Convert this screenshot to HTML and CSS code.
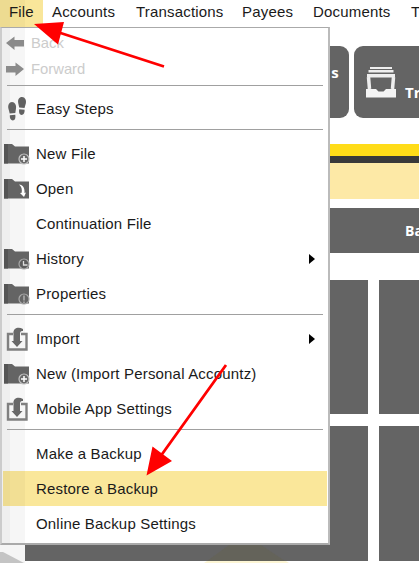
FILE: index.html
```html
<!DOCTYPE html>
<html lang="en">
<head>
<meta charset="utf-8">
<title>Accounts</title>
<link rel="stylesheet" href="styles.css">
</head>
<body>
<svg class="defs" aria-hidden="true">
  <defs>
    <symbol id="folder" viewBox="0 0 27 24"><path d="M1 2h8l3 2.500h14V21.500H1z" fill="#646464"/><path d="M1 2h4v19.500H1z" fill="#555"/></symbol>
    <symbol id="import" viewBox="0 0 27 24"><path d="M10 7H5v15.500h18.500V7H18" fill="none" stroke="#808080" stroke-width="2.400"/><path d="M20 2C14.500-1 9.500 2 10.500 7v7H8.500l5.500 6 5.500-6h-2.500V7c0-2.500 1-3.500 3-3z" fill="#686868"/></symbol>
  </defs>
</svg>
<div class="app">
  <nav class="menubar"><span class="top file">File</span><span class="top accounts">Accounts</span><span class="top transactions">Transactions</span><span class="top payees">Payees</span><span class="top documents">Documents</span><span class="top">T</span></nav>
  <div class="toolbar">
    <div class="tool first"><span>s</span></div>
    <div class="tool second">
      <svg width="32" height="33" viewBox="0 0 32 33"><path d="M5 1h22v2H5zM3.500 4h25v2.500h-25zM2 8h28v3.500H2z" fill="#eee"/><path d="M3.500 11l1 12M28.500 11l-1 12" stroke="#eee" stroke-width="3.500"/><path d="M1 23h10l2.500 2.500h5L21 23h10v8.500H1z" fill="#f4f4f4"/></svg>
      <span>Tr</span>
    </div>
  </div>
  <div class="yellow"></div><div class="dark"></div><div class="pale"></div>
  <div class="heading"><span>Ba</span></div>
  <div class="tiles"><i></i><i></i><i></i><i></i></div>
  <svg class="corner" width="300" height="18" viewBox="0 0 300 18"><path d="M0 0h25v18H0z" fill="#f5f5f5"/><path d="M0 7l3 0 21 11H0z" fill="#c4c4c4"/><path d="M229 0h32l24 16h-78z" fill="#64635a"/><path d="M207 16h79l3 2h-85z" fill="#fdf6d5"/></svg>
</div>
<div class="menu">
  <div class="item nav"><svg class="icon" viewBox="0 0 27 24"><path d="M3 12l8.500-6.500V9H21v6.500h-9.500V19z" fill="#8b8b8b"/></svg><span>Back</span></div>
  <div class="item nav"><svg class="icon" viewBox="0 0 27 24"><path d="M21 12l-8.500-6.500V9H3v6.500h9.500V19z" fill="#8b8b8b"/></svg><span>Forward</span></div>
  <hr class="tight">
  <div class="item"><svg class="icon" viewBox="0 0 27 24"><g fill="#626262"><path d="M9 5c2.800 0 4.500 3 4 6.500L12.300 16l-5.600.5-1.300-5C4.600 8 6.200 5 9 5z"/><path d="M6.800 18.300l5.500-.5c.5 3.500-.5 5.700-2.500 5.700s-3.200-2.200-3-5.200z"/><path d="M19 0c3 0 4.500 3 3.800 6.500L21.500 11l-5.300-.5-1-4.500C14.500 2.500 16.200 0 19 0z"/><path d="M16.200 12.300l5.400.5c.2 3-1 5.200-3 5.200s-3-2.200-2.400-5.700z"/></g></svg><span>Easy Steps</span></div>
  <hr>
  <div class="item"><svg class="icon" viewBox="0 0 27 24"><use href="#folder"/><circle cx="21" cy="17" r="5" fill="#6a6a6a" stroke="#c0c0c0" stroke-width="1.200"/><path d="M21 14v6m-3-3h6" stroke="#fff" stroke-width="1.500"/></svg><span>New File</span></div>
  <div class="item"><svg class="icon" viewBox="0 0 27 24"><use href="#folder"/><path d="M16 7.500c4 .5 6 3.500 5.500 8.500l1.500-.5-2 4.500-4-4 1.700-.3c.6-3.500-.2-6-2.700-8.200z" fill="#fff"/></svg><span>Open</span></div>
  <div class="item"><span class="icon"></span><span>Continuation File</span></div>
  <div class="item"><svg class="icon" viewBox="0 0 27 24"><use href="#folder"/><circle cx="21" cy="17" r="5" fill="#5c5c5c" stroke="#a8a8a8" stroke-width="1.200"/><path d="M20.500 14v4h4" fill="none" stroke="#ddd" stroke-width="1.300"/></svg><span>History</span><b class="more"></b></div>
  <div class="item"><svg class="icon" viewBox="0 0 27 24"><use href="#folder"/><circle cx="21" cy="17" r="5" fill="#666" stroke="#a8a8a8" stroke-width="1.200"/><path d="M21 13.500v5m0 1v1.500" stroke="#bbb" stroke-width="1.300"/></svg><span>Properties</span></div>
  <hr>
  <div class="item"><svg class="icon" viewBox="0 0 27 24"><use href="#import"/></svg><span>Import</span><b class="more"></b></div>
  <div class="item"><svg class="icon" viewBox="0 0 27 24"><use href="#folder"/><circle cx="21" cy="17" r="5" fill="#6a6a6a" stroke="#c0c0c0" stroke-width="1.200"/><path d="M21 14v6m-3-3h6" stroke="#fff" stroke-width="1.500"/></svg><span>New (Import Personal Accountz)</span></div>
  <div class="item"><svg class="icon" viewBox="0 0 27 24"><use href="#import"/></svg><span>Mobile App Settings</span></div>
  <hr>
  <div class="item"><span class="icon"></span><span>Make a Backup</span></div>
  <div class="item selected"><span class="icon"></span><span>Restore a Backup</span></div>
  <div class="item"><span class="icon"></span><span>Online Backup Settings</span></div>
</div>
<svg class="arrows" width="419" height="563" viewBox="0 0 419 563"><g stroke="#f00" stroke-width="2.800"><path d="M164 66.500L59 32.500M226 365l-66 92"/></g><path d="M34 24l30-2-6 22.500zM146.500 475.500l6-29 19.500 14.500z" fill="#f00"/></svg>
</body>
</html>
```

FILE: styles.css
```css
body {
  margin: 0;
  width: 419px;
  height: 563px;
  overflow: hidden;
  position: relative;
  background: #fff;
  color: #1a1a1a;
  font: 15px "Liberation Sans", Arial, sans-serif;
  letter-spacing: 0.18px;
}
.defs { position: absolute; width: 0; height: 0; }
.app { height: 563px; overflow: hidden; }
.menubar { display: flex; height: 27px; line-height: 23px; white-space: nowrap; }
.top { flex: none; box-sizing: border-box; }
.file {
  width: 43px;
  padding-left: 9px;
  margin-right: 9px;
  background: linear-gradient(90deg, #eddb91 0 10px, #f2df94 10px 25px, #f9e69a 25px);
}
.accounts { width: 84px; }
.transactions { width: 106px; }
.payees { width: 71px; }
.documents { width: 98px; }
.toolbar { display: flex; gap: 5px; padding: 19px 0 0 269px; height: 72px; }
.tool {
  flex: none;
  box-sizing: border-box;
  height: 72px;
  border-radius: 9px;
  background: #646464;
  color: #fff;
  font: bold 15px "Open Sans", sans-serif;
  display: flex;
}
.first { width: 80px; padding: 16px 10px 0 0; justify-content: flex-end; }
.second { width: 100px; padding: 20px 0 0 11px; }
.second span { padding: 16px 0 0 8px; }
.yellow { height: 12px; margin-top: 26px; background: #ffdc18; }
.dark { height: 7px; background: #393939; }
.pale { height: 36px; background: #fde9a6; }
.heading {
  height: 45px;
  margin: 9px 0 27px;
  padding-left: 405px;
  line-height: 45px;
  background: #646464;
  color: #fff;
  font-family: "Open Sans", sans-serif;
  font-size: 14px;
  font-weight: bold;
}
.tiles {
  display: grid;
  grid-template: 134px 135px / 342.5px 342px;
  gap: 12px 11.5px;
  padding-left: 25px;
}
.tiles i { background: #646464; }
.corner { position: absolute; left: 0; top: 545px; }
.menu {
  position: absolute;
  left: 0;
  top: 27px;
  width: 330px;
  height: 518px;
  box-sizing: border-box;
  padding-top: 2px;
  border: 1px solid #aaa;
  border-right: 2px solid #bbb;
  border-bottom: 2px solid #aaa;
  border-left: 2px solid #ccc;
  background: linear-gradient(90deg, #efefef 0 8px, #f6f6f6 8px 23px, #fff 23px);
}
.item {
  display: flex;
  align-items: center;
  height: 35px;
  margin: 0 1px;
  white-space: nowrap;
}
.icon { flex: none; width: 27px; height: 24px; margin-right: 6px; }
.nav { height: 26px; color: #ccc; font-size: 14.800px; letter-spacing: 0; }
.nav .icon { margin-right: 1px; }
.selected { background: linear-gradient(90deg, #eddb91 0 7px, #f2df94 7px 22px, #fae79a 22px); }
.more {
  margin: 0 12px 0 auto;
  border: 5px solid transparent;
  border-left: 6px solid #000;
  border-right: 0;
}
hr { height: 1px; margin: 3px 5px 6px; border: 0; background: #a0a0a0; }
hr.tight { margin-bottom: 5px; }
.arrows { position: absolute; left: 0; top: 0; }
```
